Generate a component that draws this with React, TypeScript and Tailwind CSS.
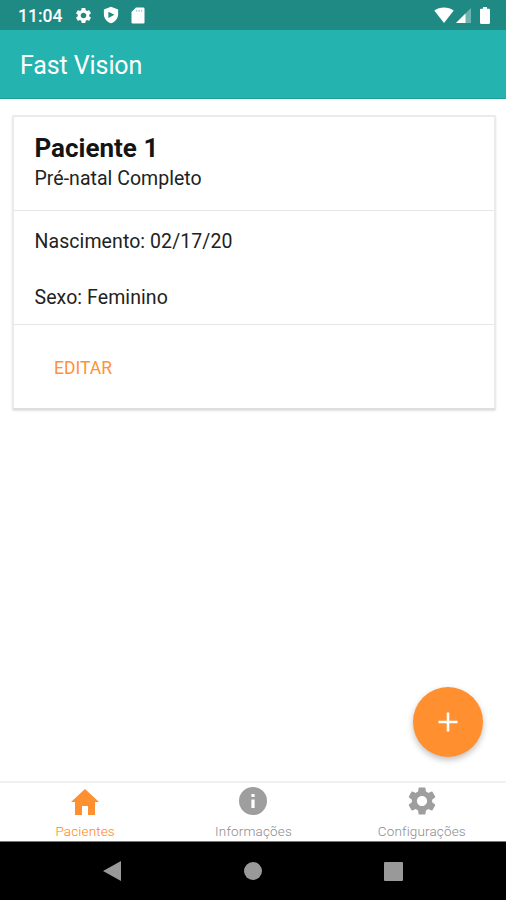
import type { ReactNode } from "react";
import { MdSettings } from "react-icons/md";
import { clsx } from "clsx";

type Tab = {
  label: string;
  icon: ReactNode;
  active?: boolean;
};

function HomeIcon() {
  return (
    <svg viewBox="0 0 28 26" className="mt-px h-[26px] w-7" fill="currentColor">
      <path d="M14 0 0 13h4v13h7v-9h6v9h7V13h4L14 0Z" />
    </svg>
  );
}

function InfoIcon() {
  return (
    <svg viewBox="0 0 28 28" className="h-7 w-7" fill="currentColor">
      <path
        fillRule="evenodd"
        d="M14 0a14 14 0 1 0 0 28 14 14 0 0 0 0-28Zm-1.600 7h3.200v3h-3.200V7Zm0 5.500h3.200V21h-3.200v-8.500Z"
      />
    </svg>
  );
}

const tabs: Tab[] = [
  { label: "Pacientes", icon: <HomeIcon />, active: true },
  { label: "Informações", icon: <InfoIcon /> },
  { label: "Configurações", icon: <MdSettings size={34} /> },
];

function StatusBar() {
  return (
    <div className="flex h-[30px] items-center bg-[#1f8a84] pr-4 pl-[18px] text-white">
      <span className="w-[56px] pt-[3px] text-[17.5px] leading-none font-medium whitespace-nowrap">11:04</span>
      <MdSettings size={19} />
      <svg viewBox="0 0 24 24" className="ml-[9px] h-[18px] w-[18px]" fill="currentColor">
        <path
          fillRule="evenodd"
          d="M12 1 2.500 4.500V11c0 5.600 4 10.300 9.500 12 5.500-1.700 9.500-6.400 9.500-12V4.500L12 1ZM8.500 7.500l8 4.200-8 4.200V7.500Z"
        />
      </svg>
      <svg viewBox="0 0 14 17" className="ml-[11px] h-[17px] w-[14px]" fill="currentColor">
        <path
          fillRule="evenodd"
          d="M5 .5h7.200a1.300 1.300 0 0 1 1.300 1.300v13.400a1.300 1.300 0 0 1-1.300 1.300H1.800a1.300 1.300 0 0 1-1.300-1.300V5L5 .5Z"
        />
        <path d="M5.200 2.700h1.100v2H5.200Zm2.400 0h1.100v2H7.600Zm2.400 0h1.100v2H10Z" fill="#9accc9" />
      </svg>
      <svg viewBox="0 0 20 16" className="ml-auto h-4 w-5" fill="currentColor">
        <path d="M10 16 .3 3.500C3 1.500 6.300.4 10 .4s7 1.100 9.700 3.100L10 16Z" />
      </svg>
      <svg viewBox="0 0 15 15" className="ml-[2px] h-[15px] w-[15px]" fill="currentColor">
        <path d="M0 15 15 0v15H0Z" opacity=".35" />
        <path d="M0 15 9.500 5.500V15H0Z" />
      </svg>
      <svg viewBox="0 0 10 17" className="ml-[9px] h-[17px] w-[10px]" fill="currentColor">
        <path d="M3 0h4v1.700h1.800c.7 0 1.200.5 1.200 1.200v12.900c0 .7-.5 1.200-1.200 1.200H1.200C.5 17 0 16.500 0 15.800V2.900c0-.7.500-1.200 1.200-1.200H3V0Z" />
      </svg>
    </div>
  );
}

function PatientCard() {
  return (
    <div className="mt-4 mr-[10px] ml-3 h-[295px] rounded-[2px] border-2 border-[#ebebeb] border-b-[#dedede] bg-white text-[#222] shadow-[0_1px_2px_rgba(0,0,0,0.12)]">
      <div className="h-[94px] border-b border-[#e6e6e6] px-[20.5px] pt-4">
        <h2 className="text-[26px] leading-[30px] font-bold text-[#141414]">Paciente 1</h2>
        <p className="pt-1 text-[19.5px] leading-6 tracking-[0.03px]">Pré-natal Completo</p>
      </div>
      <div className="h-[114px] border-b border-[#e6e6e6] px-[20.5px] pt-[19px] text-[19.5px] leading-6 tracking-[0.08px]">
        <p>Nascimento: 02/17/20</p>
        <p className="mt-8">Sexo: Feminino</p>
      </div>
      <button className="mt-[31px] ml-10 block text-[17.5px] leading-6 text-[#ff9138]">EDITAR</button>
    </div>
  );
}

function TabBar() {
  return (
    <nav className="grid h-[61px] grid-cols-3 border-t-2 border-b border-t-[#f0f0f0] border-b-[#777] bg-white pl-px">
      {tabs.map((tab) => (
        <button
          key={tab.label}
          className={clsx(
            "flex flex-col items-center text-[13.5px] leading-4 font-light tracking-[0.15px]",
            tab.active ? "text-[#ff8420]" : "text-[#8c8c8c]"
          )}
        >
          <span className={clsx("flex h-9 items-center", tab.active ? "text-[#ff9030]" : "text-[#9e9e9e]")}>
            {tab.icon}
          </span>
          <span className="mt-1">{tab.label}</span>
        </button>
      ))}
    </nav>
  );
}

function SystemNav() {
  return (
    <div className="grid h-[58px] grid-cols-[140px_140px_140px] justify-center bg-black text-[#999]">
      <div className="flex items-center justify-center">
        <svg viewBox="0 0 20 22" className="mr-[2px] h-[22px] w-5" fill="currentColor">
          <path d="M19 1v20L1 11 19 1Z" />
        </svg>
      </div>
      <div className="flex items-center justify-center">
        <div className="h-[18px] w-[18px] rounded-full bg-current" />
      </div>
      <div className="flex items-center justify-center">
        <div className="h-[19px] w-[19px] rounded-[1px] bg-current" />
      </div>
    </div>
  );
}

export default function App() {
  return (
    <div className="flex h-[900px] w-[506px] flex-col overflow-hidden bg-white font-[Roboto,sans-serif]">
      <StatusBar />
      <header className="flex h-[69px] items-center border-b border-[#1e9f9a] bg-[#25b3b0] px-5 pt-1">
        <h1 className="text-[25px] leading-8 tracking-[-0.1px] text-white">Fast Vision</h1>
      </header>
      <main className="relative flex-1">
        <PatientCard />
        <button
          aria-label="Adicionar"
          className="absolute right-[23px] bottom-6 flex h-[70px] w-[70px] items-center justify-center rounded-full bg-[#ff8f2f] text-white shadow-[0_3px_6px_rgba(0,0,0,0.25)]"
        >
          <svg viewBox="0 0 20 20" className="h-5 w-5" stroke="currentColor" strokeWidth="2.6">
            <path d="M10 .5v19M.5 10h19" />
          </svg>
        </button>
      </main>
      <TabBar />
      <SystemNav />
    </div>
  );
}
